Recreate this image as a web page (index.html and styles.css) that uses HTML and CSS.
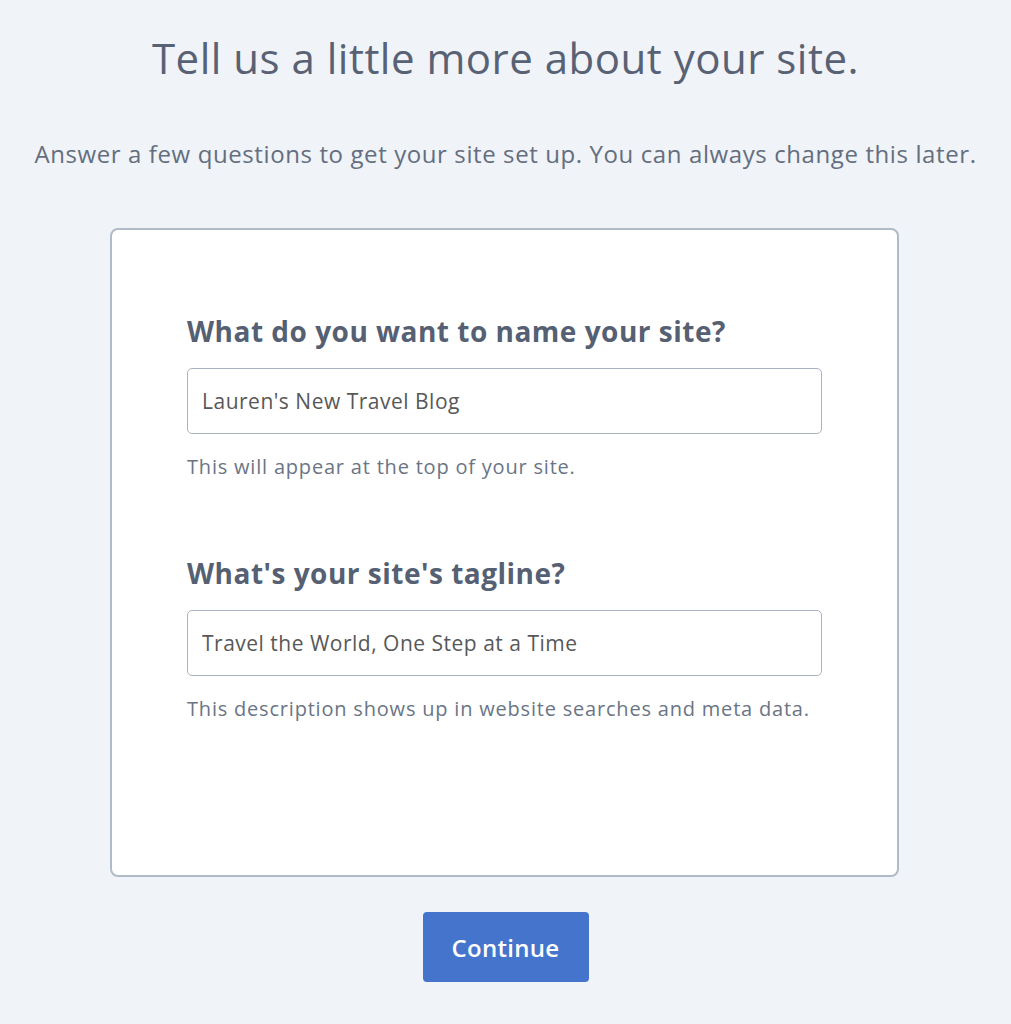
FILE: index.html
```html
<!DOCTYPE html>
<html lang="en">
<head>
    <meta charset="UTF-8">
    <meta name="viewport" content="width=device-width, initial-scale=1.0">
    <title>Site Setup</title>
    <link rel="stylesheet" href="styles.css">
</head>
<body>
    <div class="page">
        <h1 class="title">Tell us a little more about your site.</h1>
        <p class="intro">Answer a few questions to get your site set up. You can always change this later.</p>

        <section class="card">
            <form class="setup-form">
                <div class="field">
                    <label for="site_name">What do you want to name your site?</label>
                    <input type="text" id="site_name" name="site_name" value="Lauren's New Travel Blog">
                    <p class="help">This will appear at the top of your site.</p>
                </div>
                <div class="field">
                    <label for="tagline">What's your site's tagline?</label>
                    <input type="text" id="tagline" name="tagline" value="Travel the World, One Step at a Time">
                    <p class="help">This description shows up in website searches and meta data.</p>
                </div>
            </form>
        </section>

        <button class="continue" type="button">Continue</button>
    </div>
</body>
</html>
```

FILE: styles.css
```css
body {
    font-family: "Open Sans", Lato, sans-serif;
    background-color: #f0f3f8;
    color: #5a6476;
    margin: 0;
    padding: 0;
}

.page {
    display: flex;
    flex-direction: column;
    align-items: center;
    padding-top: 31px;
}

.title {
    font-size: 42px;
    font-weight: 400;
    letter-spacing: 0.5px;
    margin: 0;
    line-height: 54px;
    color: #586274;
}

.intro {
    font-size: 24px;
    letter-spacing: 0.6px;
    margin: 54px 0 0 0;
    line-height: 30px;
    color: #646e7e;
}

.card {
    box-sizing: border-box;
    width: 789px;
    height: 649px;
    margin-top: 59px;
    margin-right: 2px;
    background-color: #fff;
    border: 2px solid #b1bac7;
    border-radius: 8px;
    padding: 84px 76px 0 75px;
}

.setup-form {
    display: flex;
    flex-direction: column;
    gap: 77px;
}

.field label {
    display: block;
    font-size: 28px;
    font-weight: 700;
    letter-spacing: 0.5px;
    line-height: 34px;
    color: #556073;
}

.field input {
    display: block;
    box-sizing: border-box;
    width: 635px;
    height: 66px;
    margin-top: 20px;
    padding: 0 14px;
    border: 1px solid #a9b3c1;
    border-radius: 5px;
    font-family: inherit;
    font-size: 21px;
    letter-spacing: 0.5px;
    color: #585858;
    background-color: #fff;
}

.help {
    font-size: 20px;
    letter-spacing: 0.8px;
    line-height: 24px;
    white-space: nowrap;
    margin: 21px 0 0 0;
    color: #6a7585;
}

.continue {
    margin-top: 35px;
    width: 166px;
    height: 70px;
    background-color: #4474cc;
    color: #fff;
    border: none;
    border-radius: 4px;
    font-family: inherit;
    font-size: 24px;
    font-weight: 600;
    letter-spacing: 0.3px;
    cursor: pointer;
}
```
